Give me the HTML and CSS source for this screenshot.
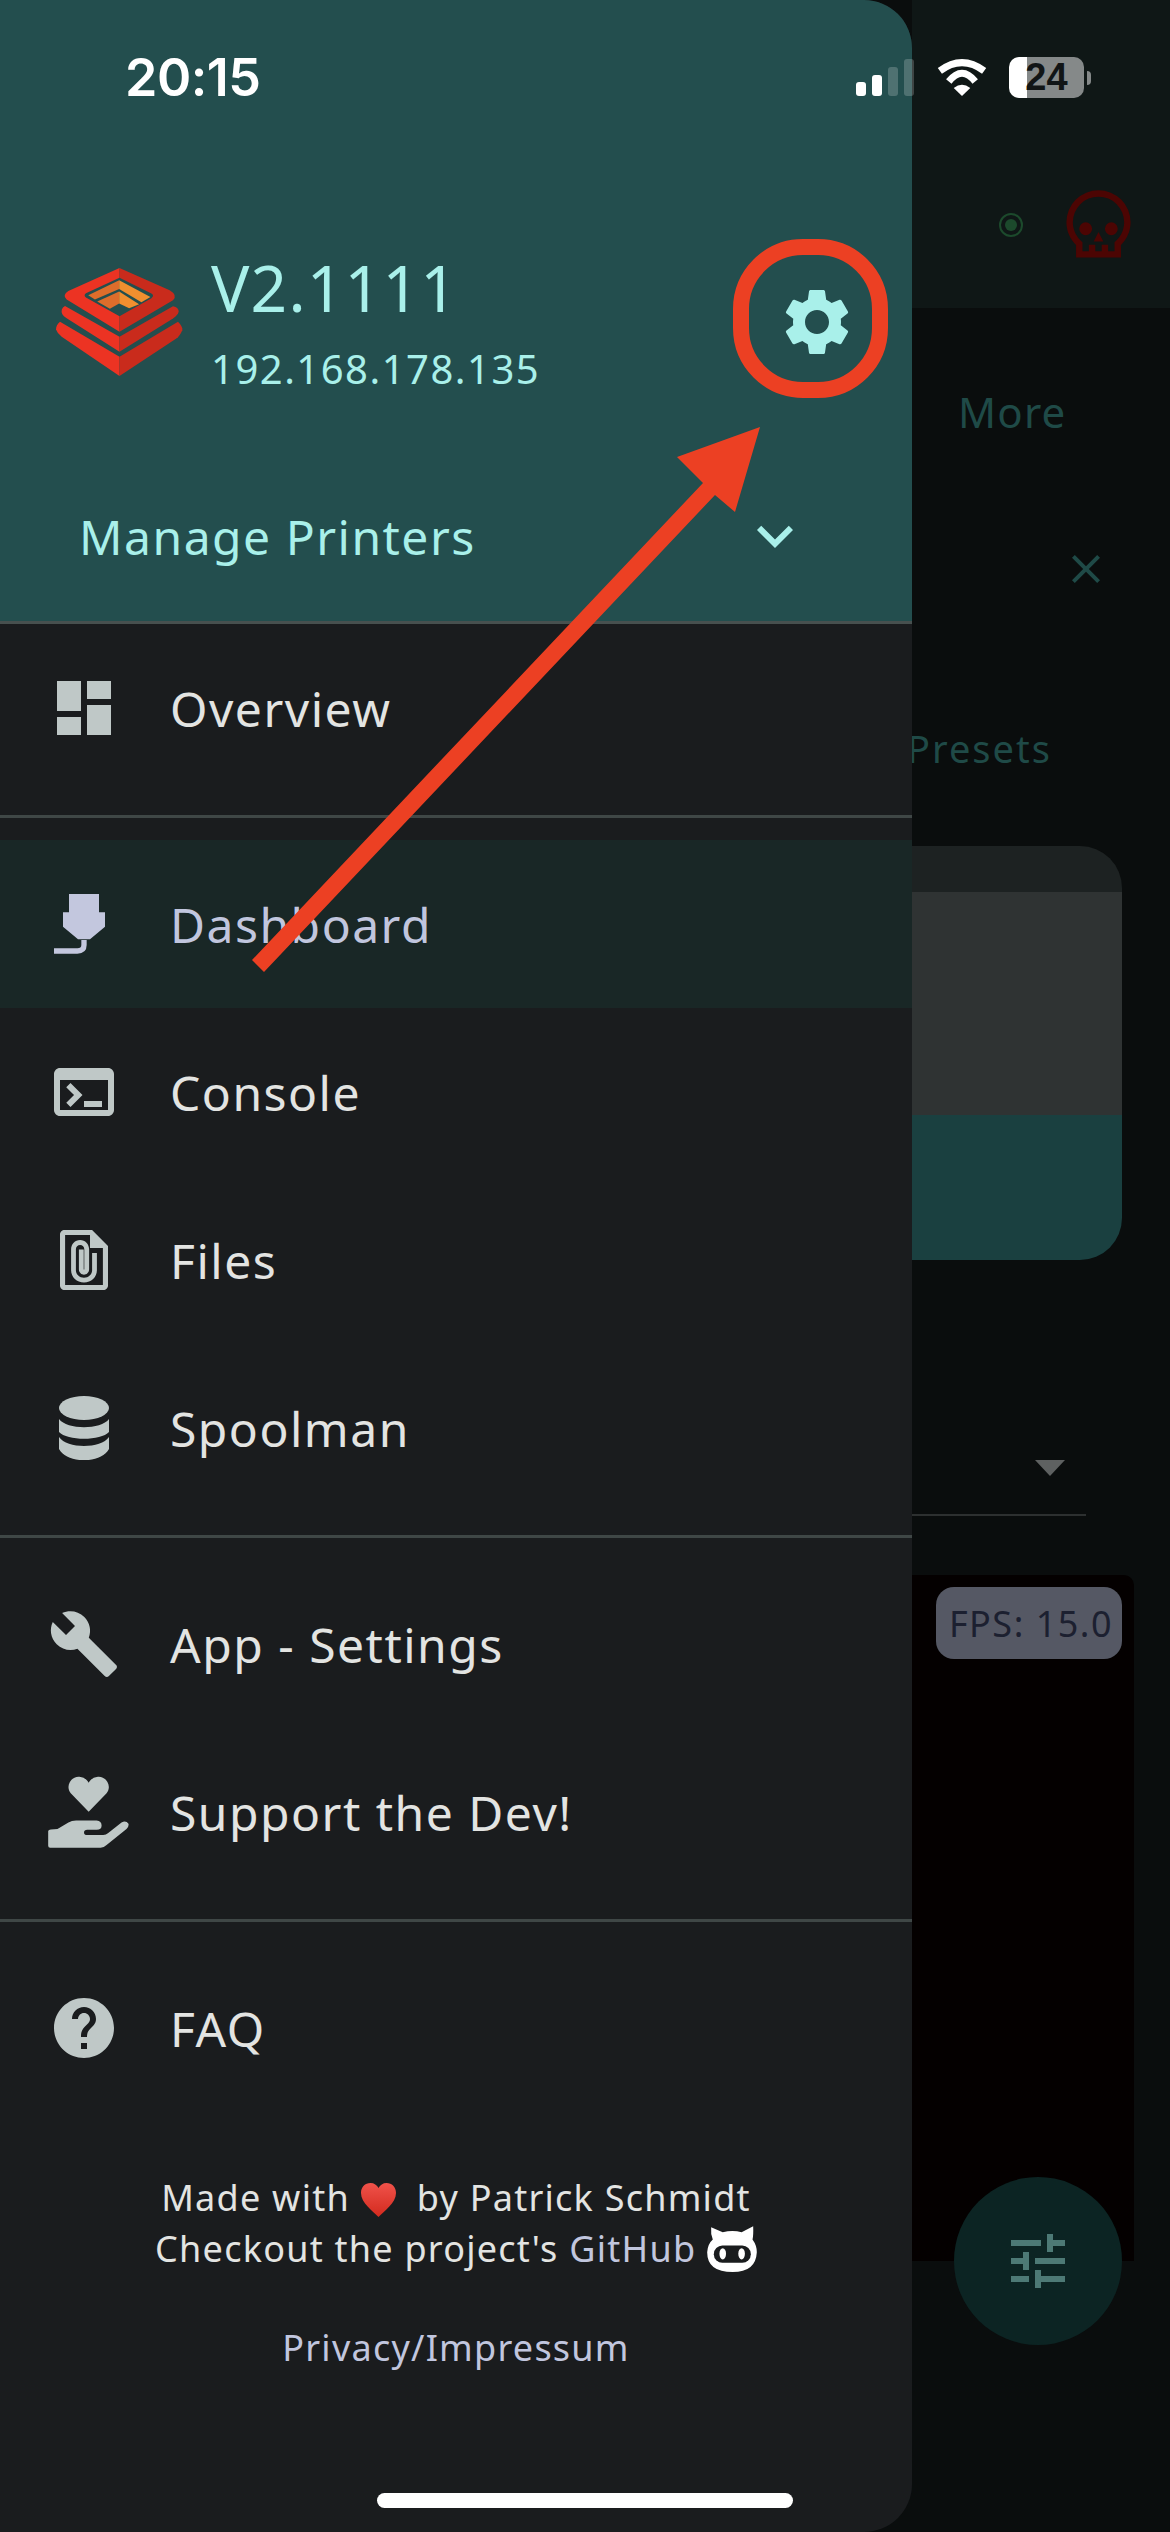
FILE: index.html
```html
<!DOCTYPE html>
<html lang="en">
<head>
<meta charset="utf-8">
<title>Mobileraker drawer</title>
<link rel="stylesheet" href="styles.css">
</head>
<body>
<div class="phone">
  <aside class="drawer">
    <header class="drawer-head">
      <div class="brand">
        <svg class="logo" viewBox="78 113 382 325">
          <path class="logo-l" d="M269 113 115 182Q95 195 110 208L269 305V258L168 202Q160 195 168 189L269 142Z"/>
          <path class="logo-r" d="M269 113 420 180Q445 195 430 210L269 305V258L365 204Q375 196 365 190L269 142Z"/>
          <path class="logo-l" d="M269 320 105 227Q90 235 97 252 100 258 110 264L269 365Z"/>
          <path class="logo-r" d="M269 320 430 228Q448 232 447 245 445 255 430 265L269 365Z"/>
          <path class="logo-l" d="M269 380 90 275Q78 285 78 298 82 310 95 320L269 438Z"/>
          <path class="logo-r" d="M269 380 445 275Q460 290 458 300 450 318 440 325L269 438Z"/>
          <polygon class="logo-ol" points="268,150 175,195 195,208 268,176"/>
          <polygon class="logo-ol" points="268,184 202,214 240,236 268,220"/>
          <polygon class="logo-or" points="268,150 362,200 335,216 268,176"/>
          <polygon class="logo-or" points="268,184 328,222 298,234 268,220"/>
        </svg>
        <div class="brand-text">
          <div class="version">V2.1111</div>
          <div class="ip">192.168.178.135</div>
        </div>
        <svg class="gear" viewBox="0 0 24 24"><path d="M19.14 12.94c.04-.3.06-.61.06-.94 0-.32-.02-.64-.07-.94l2.03-1.58c.18-.14.23-.41.12-.61l-1.92-3.32c-.12-.22-.37-.29-.59-.22l-2.39.96c-.5-.38-1.03-.7-1.62-.94l-.36-2.54c-.04-.24-.24-.41-.48-.41h-3.84c-.24 0-.43.17-.47.41l-.36 2.54c-.59.24-1.13.57-1.62.94l-2.39-.96c-.22-.08-.47 0-.59.22L2.74 8.87c-.12.21-.08.47.12.61l2.03 1.58c-.05.3-.09.63-.09.94s.02.64.07.94l-2.03 1.58c-.18.14-.23.41-.12.61l1.92 3.32c.12.22.37.29.59.22l2.39-.96c.5.38 1.03.7 1.62.94l.36 2.54c.05.24.24.41.48.41h3.84c.24 0 .44-.17.47-.41l.36-2.54c.59-.24 1.13-.56 1.62-.94l2.39.96c.22.08.47 0 .59-.22l1.92-3.32c.12-.22.07-.47-.12-.61l-2.01-1.58zM12 15.6c-1.98 0-3.6-1.62-3.6-3.6s1.62-3.6 3.6-3.6 3.6 1.62 3.6 3.6-1.62 3.6-3.6 3.6z"/></svg>
      </div>
      <div class="manage">
        <span>Manage Printers</span>
        <svg class="chevron" viewBox="0 0 24 24"><path d="M16.59 8.59 12 13.17 7.41 8.59 6 10l6 6 6-6z"/></svg>
      </div>
    </header>

    <nav class="menu">
      <a class="row">
        <span class="ico"><svg viewBox="0 0 24 24"><path d="M3 13h8V3H3v10zm0 8h8v-6H3v6zm10 0h8V11h-8v10zm0-18v6h8V3h-8z"/></svg></span>
        <span>Overview</span>
      </a>
      <div class="sep"></div>
      <a class="row row-active">
        <span class="ico"><svg class="nozzle" viewBox="162 822 153 180"><path d="M207 822H297V877H315V920L270 958H234L189 920V877H207Z"/><path class="hose" d="M252 960V975Q252 993 232 993H162"/></svg></span>
        <span>Dashboard</span>
      </a>
      <a class="row">
        <span class="ico"><svg viewBox="0 0 24 24"><path d="M20 4H4c-1.1 0-2 .9-2 2v12c0 1.1.9 2 2 2h16c1.1 0 2-.9 2-2V6c0-1.1-.9-2-2-2zm0 14H4V8h16v10zm-2-1h-6v-2h6v2zM7.5 17l-1.41-1.41L8.67 13l-2.59-2.59L7.5 9l4 4-4 4z"/></svg></span>
        <span>Console</span>
      </a>
      <a class="row">
        <span class="ico"><svg viewBox="0 0 24 24"><path fill-rule="evenodd" d="M5.5 2H14.7L20 7.3V20.5C20 21.3 19.3 22 18.5 22H5.5C4.7 22 4 21.3 4 20.5V3.5C4 2.7 4.7 2 5.5 2ZM5.7 3.7V20.3H18.3V8H14V3.7ZM16.3 9.7V15.4C16.3 17.7 14.4 19.5 12 19.5S7.7 17.7 7.7 15.4V8.4C7.700 6.7 9 5.300 10.700 5.300S13.700 6.7 13.700 8.400V15.200C13.700 16.100 12.900 16.900 12 16.900S10.300 16.100 10.300 15.200V8.500H11.900V15.200H12.100V8.400C12.100 7.600 11.500 7 10.700 7S9.300 7.600 9.300 8.400V15.400C9.300 16.800 10.500 17.900 12 17.900S14.700 16.800 14.700 15.400V9.700Z"/></svg></span>
        <span>Files</span>
      </a>
      <a class="row">
        <span class="ico"><svg class="db" viewBox="0 0 50 64"><ellipse cx="25" cy="12" rx="25" ry="12"/><path d="M0 23C8 34 42 34 50 23V36C42 45 8 45 0 36Z"/><path d="M0 41C8 53 42 53 50 41V53C42 68 8 68 0 53Z"/></svg></span>
        <span>Spoolman</span>
      </a>
      <div class="sep"></div>
      <a class="row">
        <span class="ico"><svg viewBox="0 0 24 24"><path d="M22.7 19l-9.1-9.1c.9-2.3.4-5-1.5-6.9-2-2-5-2.4-7.400-1.300L9 6 6 9 1.600 4.700C.4 7.100.9 10.100 2.900 12.100c1.900 1.900 4.600 2.400 6.900 1.500l9.100 9.100c.4.4 1 .4 1.400 0l2.300-2.300c.5-.4.5-1.100.1-1.400z"/></svg></span>
        <span>App - Settings</span>
      </a>
      <a class="row">
        <span class="ico"><svg class="hand" viewBox="144 528 243 217"><path d="M266 636 212 580C195 560 212 528 238 530 252 531 262 540 266 548 270 540 280 531 294 530 320 528 337 560 320 580Z"/><path d="M144 694Q146 688 172 688L205 668Q215 662 228 662H290Q305 664 305 677 305 690 290 690H262Q252 690 252 698 252 706 262 706H310Q318 706 325 700L365 668Q378 660 386 672 388 680 380 688L320 736Q312 744 302 744H150Q144 744 144 738Z"/></svg></span>
        <span>Support the Dev!</span>
      </a>
      <div class="sep"></div>
      <a class="row">
        <span class="ico"><svg viewBox="0 0 24 24"><path d="M12 2C6.480 2 2 6.480 2 12s4.480 10 10 10 10-4.480 10-10S17.520 2 12 2zm1 17h-2v-2h2v2zm2.070-7.750l-.9.920C13.450 12.900 13 13.500 13 15h-2v-.5c0-1.100.45-2.100 1.170-2.830l1.240-1.260c.37-.36.59-.86.59-1.410 0-1.100-.9-2-2-2s-2 .9-2 2H8c0-2.210 1.790-4 4-4s4 1.790 4 4c0 .88-.36 1.680-.93 2.250z"/></svg></span>
        <span>FAQ</span>
      </a>
    </nav>

    <footer class="foot">
      <p class="foot-line">Made with <svg class="heart" viewBox="0 0 35 34"><defs><linearGradient id="heartfill" x1="0" y1="0" x2="0" y2="1"><stop offset="0" stop-color="#f0524a"/><stop offset="1" stop-color="#d32a1e"/></linearGradient></defs><path fill="url(#heartfill)" d="M17.500 34C12 28 0 20 0 10 0 4 4 0 9.500 0 13 0 16 2 17.500 5 19 2 22 0 25.500 0 31 0 35 4 35 10 35 20 23 28 17.500 34Z"/></svg> &nbsp;by Patrick Schmidt</p>
      <p class="foot-line">Checkout the project's <a class="link">GitHub</a> <svg class="octo" viewBox="18 78 150 142"><path class="octo-head" d="M30 85 65 100Q95 92 122 100L157 82Q158 110 155 122 168 140 168 160 165 220 95 220 18 220 18 160 20 135 35 122 28 105 30 85Z"/><rect class="octo-mask" x="38" y="140" width="112" height="52" rx="26"/><ellipse class="octo-head" cx="65" cy="165" rx="10" ry="17"/><ellipse class="octo-head" cx="122" cy="165" rx="10" ry="17"/></svg></p>
      <p class="privacy"><a class="link">Privacy/Impressum</a></p>
    </footer>
  </aside>

  <main class="backdrop">
    <div class="appbar">
      <svg class="dot" viewBox="0 0 24 24"><circle class="dot-ring" cx="12" cy="12" r="11"/><circle class="dot-core" cx="12" cy="12" r="6"/></svg>
      <svg class="skull" viewBox="0 0 24 24"><path d="M8,15A2,2 0 0,1 6,13A2,2 0 0,1 8,11A2,2 0 0,1 10,13A2,2 0 0,1 8,15M10.500,17L12,14L13.500,17H10.500M16,15A2,2 0 0,1 14,13A2,2 0 0,1 16,11A2,2 0 0,1 18,13A2,2 0 0,1 16,15M22,11A10,10 0 0,0 12,1A10,10 0 0,0 2,11C2,13.800 3.200,16.300 5,18.100V22H19V18.100C20.800,16.300 22,13.800 22,11M17,20H15V18H13V20H11V18H9V20H7V17.200C5.200,15.700 4,13.500 4,11A8,8 0 0,1 12,3A8,8 0 0,1 20,11C20,13.500 18.800,15.800 17,17.200V20Z"/></svg>
    </div>
    <div class="tab-more">More</div>
    <div class="close-row"><svg class="close" viewBox="0 0 24 24"><path d="M19 6.410 17.590 5 12 10.590 6.410 5 5 6.410 10.590 12 5 17.590 6.410 19 12 13.410 17.590 19 19 17.590 13.410 12z"/></svg></div>
    <div class="tab-presets">Presets</div>
    <section class="card">
      <div class="band band-top"></div>
      <div class="band band-mid"></div>
      <div class="band band-bot"></div>
    </section>
    <div class="select"><span class="caret"></span></div>
    <section class="camera">
      <span class="fps">FPS: 15.0</span>
    </section>
    <button class="fab"><svg viewBox="0 0 24 24"><path d="M3 17v2h6v-2H3zM3 5v2h10V5H3zm10 16v-2h8v-2h-8v-2h-2v6h2zM7 9v2H3v2h4v2h2V9H7zm14 4v-2H11v2h10zm-6-4h2V7h4V5h-4V3h-2v6z"/></svg></button>
  </main>

  <div class="statusbar">
    <span class="time">20:15</span>
    <span class="signal"><i class="on s1"></i><i class="on s2"></i><i class="s3"></i><i class="s4"></i></span>
    <svg class="wifi" viewBox="170 177 150 112"><path class="wifi-arc" d="M178 213Q245 163 312 213"/><path class="wifi-arc" d="M205 245Q245 195 285 245"/><path class="wifi-dot" d="M220 265Q245 245 270 265L245 289Z"/></svg>
    <span class="battery">24</span>
    <span class="battery-cap"></span>
  </div>

  <svg class="annotation" viewBox="0 0 1170 2532">
    <rect class="ring" x="741" y="247" width="139" height="143" rx="62"/>
    <polygon class="arrow" points="760,427 677,457 703,483 252,960 264,972 715,495 735,512"/>
  </svg>

  <div class="homebar"></div>
</div>
</body>
</html>
```

FILE: styles.css
```css
* { box-sizing: border-box; }
html, body { margin: 0; padding: 0; }
body { background: #0a0d0d; font-family: "Noto Sans", "Open Sans", sans-serif; }

.phone {
  position: relative;
  display: flex;
  width: 1170px;
  height: 2532px;
  overflow: hidden;
  background: #0a0d0d;
}

/* Drawer */
.drawer {
  position: relative;
  z-index: 1;
  flex: 0 0 912px;
  display: flex;
  flex-direction: column;
  height: 2532px;
  background: #1a1c1e;
  border-radius: 0 48px 48px 0;
  overflow: hidden;
}
.drawer-head {
  height: 624px;
  padding: 250px 55px 0 56px;
  background: #234e4e;
  border-bottom: 3px solid #47504f;
  color: #a9f0ea;
}
.brand { display: flex; align-items: center; height: 144px; }
.logo { width: 127px; height: 108px; flex: none; }
.logo-l { fill: #ec3323; }
.logo-r { fill: #c92b1c; }
.logo-ol { fill: #dd6d2b; }
.logo-or { fill: #f18f2f; }
.brand-text { margin-left: 28px; flex: 1; }
.version { font-size: 64px; line-height: 76px; letter-spacing: 1.2px; }
.ip { font-size: 40px; line-height: 50px; margin-top: 18px; letter-spacing: 1.5px; }
.gear { width: 80px; height: 80px; flex: none; fill: #a9f0ea; }
.manage {
  display: flex;
  align-items: center;
  justify-content: space-between;
  height: 60px;
  margin: 112px 46px 0 23px;
  font-size: 48px;
  letter-spacing: 1.5px;
}
.chevron { width: 72px; height: 72px; fill: #a9f0ea; flex: none; }

.menu { display: flex; flex-direction: column; }
.row {
  display: flex;
  align-items: center;
  gap: 50px;
  height: 168px;
  padding-left: 48px;
  font-size: 48px;
  letter-spacing: 1.5px;
  color: #e3e4e2;
}
.row-active { background: #192726; color: #c1c6de; }
.ico { display: flex; align-items: center; justify-content: center; width: 72px; height: 72px; flex: none; }
.ico svg { width: 72px; height: 72px; fill: #bfc8c7; }
.ico .nozzle { width: 51px; height: 60px; fill: #c3c7de; margin-right: 9px; }
.nozzle .hose { fill: none; stroke: #c3c7de; stroke-width: 16; }
.ico .db { width: 50px; height: 64px; }
.ico .hand { width: 81px; height: 72px; flex: none; margin-left: 9px; }
.sep { position: relative; height: 48px; }
.sep::after {
  content: "";
  position: absolute;
  left: 0;
  right: 0;
  top: 23px;
  height: 3px;
  background: #3f4746;
}

.foot { text-align: center; padding-top: 60px; color: #e3e4e2; font-size: 36px; letter-spacing: 1.25px; }
.foot p { margin: 0; }
.foot-line { height: 51px; line-height: 51px; white-space: nowrap; }
.foot .privacy { margin-top: 48px; line-height: 51px; }
.link { color: #c1c6de; }
.heart { width: 35px; height: 34px; vertical-align: -6px; }
.octo { width: 50px; height: 47px; vertical-align: -10px; }
.octo-head { fill: #fff; }
.octo-mask { fill: #1a1c1e; }

/* Dimmed page behind the drawer */
.backdrop { position: relative; flex: 1; min-width: 0; display: flex; flex-direction: column; }
.appbar {
  display: flex;
  justify-content: flex-end;
  align-items: flex-start;
  height: 308px;
  padding: 187px 33px 0 0;
  background: #0f1716;
}
.dot { width: 24px; height: 24px; margin: 26px 37px 0 0; }
.dot-ring { fill: none; stroke: #1c4a2c; stroke-width: 2; }
.dot-core { fill: #1c4a2c; }
.skull { width: 77px; height: 77px; fill: #4c0503; }
.tab-more {
  height: 212px;
  padding-left: 46px;
  font-size: 42px;
  line-height: 208px;
  letter-spacing: 1.2px;
  color: #1f4a47;
}
.close-row { display: flex; justify-content: flex-end; align-items: center; height: 98px; padding-right: 60px; }
.close { width: 48px; height: 48px; fill: #1f4a47; }
.tab-presets {
  height: 228px;
  margin-left: -5px;
  padding-top: 105px;
  font-size: 38px;
  line-height: 50px;
  letter-spacing: 2px;
  color: #1f4a47;
}
.card {
  display: flex;
  flex-direction: column;
  height: 414px;
  margin-right: 48px;
  border-radius: 0 42px 42px 0;
  overflow: hidden;
}
.band-top { height: 46px; background: #1d2222; }
.band-mid { height: 223px; background: #2f3333; }
.band-bot { height: 145px; background: #1a4040; }
.select {
  display: flex;
  justify-content: flex-end;
  align-items: flex-end;
  height: 256px;
  margin-right: 84px;
  padding: 0 21px 38px 0;
  border-bottom: 2px solid #2d3030;
}
.caret { width: 0; height: 0; border-left: 15px solid transparent; border-right: 15px solid transparent; border-top: 16px solid #5e6161; }
.camera {
  display: flex;
  justify-content: flex-end;
  align-items: flex-start;
  height: 686px;
  margin: 59px 36px 0 0;
  padding: 12px 12px 0 0;
  background: #040000;
  border-radius: 0 10px 0 0;
}
.fps {
  display: flex;
  align-items: center;
  justify-content: center;
  width: 186px;
  height: 72px;
  padding-left: 4px;
  border-radius: 18px;
  background: #555864;
  color: #1c2030;
  font-size: 36px;
  letter-spacing: 1.5px;
}
.fab {
  position: absolute;
  left: 42px;
  top: 2177px;
  display: flex;
  align-items: center;
  justify-content: center;
  width: 168px;
  height: 168px;
  padding: 0;
  border: 0;
  border-radius: 50%;
  background: #0c2423;
}
.fab svg { width: 72px; height: 72px; fill: #4d7975; }

/* Overlays */
.statusbar {
  position: absolute;
  z-index: 2;
  left: 0;
  top: 57px;
  width: 100%;
  height: 41px;
  display: flex;
  align-items: center;
  padding-left: 125px;
  color: #fff;
}
.time { font-family: Inter, "Liberation Sans", sans-serif; font-weight: 600; font-size: 52px; line-height: 41px; width: 731px; letter-spacing: -0.5px; }
.signal { display: flex; align-items: flex-end; gap: 6px; height: 37px; }
.signal i { display: block; width: 10px; border-radius: 3px; background: rgba(255, 255, 255, 0.2); }
.signal .on { background: #fff; }
.s1 { height: 14px; }
.s2 { height: 21px; }
.s3 { height: 29px; }
.s4 { height: 37px; }
.wifi { width: 50px; height: 37px; margin-left: 23px; }
.wifi-arc { fill: none; stroke: #fff; stroke-width: 21; }
.wifi-dot { fill: #fff; }
.battery {
  width: 75px;
  height: 41px;
  margin-left: 22px;
  border-radius: 10px;
  background: linear-gradient(to right, #fff 24%, #858989 24%);
  color: #111516;
  font-family: "Liberation Sans", sans-serif;
  font-weight: 700;
  font-size: 38px;
  line-height: 41px;
  text-align: center;
}
.battery-cap { width: 4px; height: 14px; margin-left: 3px; border-radius: 0 4px 4px 0; background: #858989; }

.annotation { position: absolute; z-index: 3; left: 0; top: 0; width: 1170px; height: 2532px; pointer-events: none; }
.ring { fill: none; stroke: #ec4023; stroke-width: 16; }
.arrow { fill: #ec4023; }

.homebar {
  position: absolute;
  z-index: 4;
  left: 377px;
  top: 2493px;
  width: 416px;
  height: 15px;
  border-radius: 8px;
  background: #fff;
}
```
